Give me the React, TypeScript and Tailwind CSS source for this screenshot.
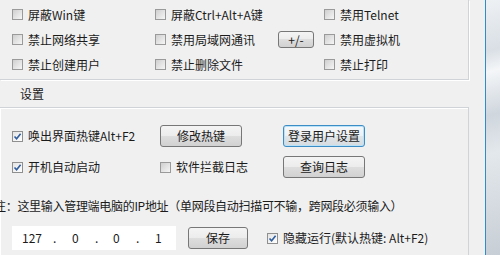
import React from "react";

const Box = ({ checked }: { checked?: boolean }) => (
  <span
    className={
      checked
        ? "relative flex h-[11px] w-[11px] shrink-0 items-center justify-center border border-[#8f8f8f] bg-[linear-gradient(135deg,#e4e4e4,#ffffff)]"
        : "relative flex h-[11px] w-[11px] shrink-0 items-center justify-center border border-[#9a9a9a] bg-[linear-gradient(135deg,#cfcfcf,#f6f6f6)]"
    }
  >
    {checked && (
      <svg width="9" height="9" viewBox="0 0 9 9">
        <path d="M1.5 4.5 L3.6 6.8 L7.6 1.8" fill="none" stroke="#2f5d9e" strokeWidth="1.6" />
      </svg>
    )}
  </span>
);

const Check = ({ label, checked }: { label: string; checked?: boolean }) => (
  <label className="flex items-center gap-[5px] whitespace-nowrap">
    <Box checked={checked} />
    <span>{label}</span>
  </label>
);

const Btn = ({
  children,
  className,
  focus,
}: {
  children: React.ReactNode;
  className: string;
  focus?: boolean;
}) => (
  <button
    className={
      (focus
        ? "border-[#3c8dc5] shadow-[inset_0_0_0_1px_#b9e2f8] bg-[linear-gradient(#f6f8fa_0%,#eef1f3_50%,#e2e6e9_50%,#d6dbdf_100%)] "
        : "border-[#777777] bg-[linear-gradient(#f4f4f4_0%,#ececec_50%,#dedede_50%,#d1d1d1_100%)] ") +
      "flex items-center justify-center rounded-[3px] border text-[12px] text-[#1b1b1b] " +
      className
    }
  >
    {children}
  </button>
);

export default function App() {
  return (
    <div
      className="flex h-[255px] w-[500px] overflow-hidden bg-[#f0f0f0] text-[12px] leading-[16px] text-[#1b1b1b]"
      style={{ fontFamily: '"Noto Sans CJK SC", "Noto Sans", sans-serif' }}
    >
      <div className="flex w-[485px] flex-col">
        {/* top group */}
        <div className="w-[469px] border-b border-r border-[#d0d4d8] pb-[2px] pt-[2px] pl-[12px] shadow-[1px_1px_0_#ffffff]">
          <div className="grid h-[25px] grid-cols-[143px_169px_1fr] items-center">
            <Check label="屏蔽Win键" />
            <Check label="屏蔽Ctrl+Alt+A键" />
            <Check label="禁用Telnet" />
          </div>
          <div className="grid h-[25px] grid-cols-[143px_169px_1fr] items-center">
            <Check label="禁止网络共享" />
            <div className="flex items-center">
              <Check label="禁用局域网通讯" />
              <Btn className="ml-auto mr-[10px] h-[17px] w-[36px] rounded-[2px] text-[11px]">+/-</Btn>
            </div>
            <Check label="禁用虚拟机" />
          </div>
          <div className="grid h-[25px] grid-cols-[143px_169px_1fr] items-center">
            <Check label="禁止创建用户" />
            <Check label="禁止删除文件" />
            <Check label="禁止打印" />
          </div>
        </div>

        <div className="flex h-[27px] items-center pl-[20px] pt-[1px]">设置</div>

        {/* lower group */}
        <div className="flex w-[469px] flex-1 flex-col border-r border-t border-[#d0d4d8] shadow-[1px_1px_0_#ffffff_inset]">
          <div className="mt-[17px] flex h-[22px] items-center pl-[12px]">
            <div className="w-[148px]">
              <Check label="唤出界面热键Alt+F2" checked />
            </div>
            <Btn className="h-[22px] w-[82px]">修改热键</Btn>
            <Btn focus className="ml-[41px] h-[22px] w-[82px]">登录用户设置</Btn>
          </div>
          <div className="mt-[9px] flex h-[22px] items-center pl-[12px]">
            <div className="w-[148px]">
              <Check label="开机自动启动" checked />
            </div>
            <div className="w-[123px]">
              <Check label="软件拦截日志" />
            </div>
            <Btn className="h-[22px] w-[82px]">查询日志</Btn>
          </div>
          <div className="-ml-[6px] mt-[20px] whitespace-nowrap tracking-[-0.3px]">
            注：这里输入管理端电脑的IP地址（单网段自动扫描可不输，跨网段必须输入）
          </div>
          <div className="mt-[12px] flex items-center pl-[12px]">
            <div className="flex h-[24px] w-[164px] items-center bg-white pl-[10px] text-[12px]">
              <span className="w-[31px]">127</span>
              <span className="w-[19px]">.</span>
              <span className="w-[23px]">0</span>
              <span className="w-[18px]">.</span>
              <span className="w-[23px]">0</span>
              <span className="w-[19px]">.</span>
              <span>1</span>
            </div>
            <Btn className="ml-[12px] h-[22px] w-[60px]">保存</Btn>
            <div className="ml-[19px]">
              <Check label="隐藏运行(默认热键: Alt+F2)" checked />
            </div>
          </div>
        </div>
      </div>
      <div className="w-px bg-[#2f8bc9]" />
      <div className="flex-1 bg-[linear-gradient(165deg,#eef1f4_0%,#d9dfe5_20%,#f4f6f8_28%,#cfd6dd_45%,#e3e8ec_60%,#c7ced5_100%)]" />
    </div>
  );
}
